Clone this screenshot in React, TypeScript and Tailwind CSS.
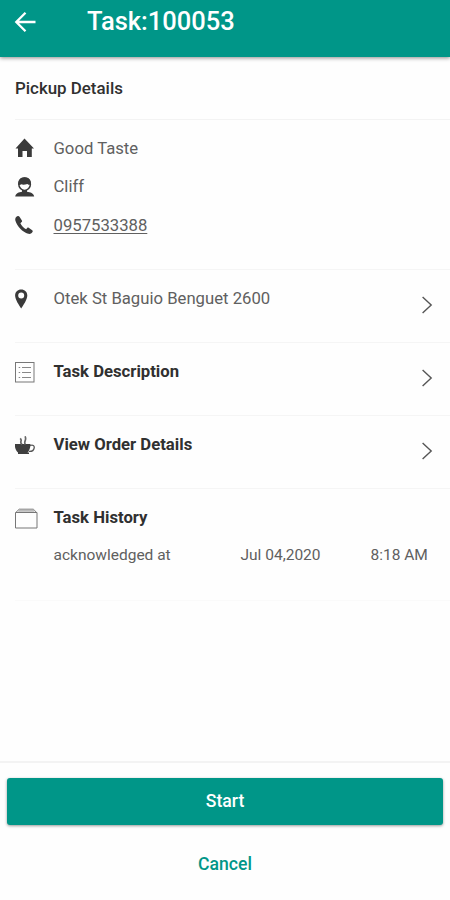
import type { ReactNode } from "react";

const PICKUP_LABEL = "Pickup Details";

function ArrowBack() {
  return (
    <svg width="22" height="22" viewBox="0 0 22 22" fill="none" stroke="#fff" strokeWidth="2.3">
      <path d="M21.5 11H3M11.5 1.8L2.3 11L11.5 20.2" />
    </svg>
  );
}

function HomeIcon() {
  return (
    <svg width="20" height="20" viewBox="0 0 20 20" fill="#3a3a3a">
      <path d="M9.5 0.5L19 10.5H16.8V19H12V13H7.5V19H3V10.5H0.5L9.5 0.5Z" />
    </svg>
  );
}

function PersonIcon() {
  return (
    <svg width="20" height="20" viewBox="0 0 20 20">
      <path d="M7 12H12V14.8C15.2 15.2 18.8 16.4 19.2 19.6H0.2C0.6 16.4 4 15.2 7 14.8Z" fill="#3a3a3a" />
      <ellipse cx="9.6" cy="7.2" rx="5.8" ry="6.2" fill="#fff" stroke="#3a3a3a" strokeWidth="1.5" />
      <path d="M3.2 7.8C2.8 3 5.4 0.3 9.6 0.3S16.4 3 16 7.8C14.2 8 13.2 7.8 12.4 7C9.6 7.8 7.2 7.8 6.4 7.2C5.6 7.9 4.6 8 3.2 7.8Z" fill="#3a3a3a" />
    </svg>
  );
}

function PhoneIcon() {
  return (
    <svg width="20" height="20" viewBox="0 0 20 20" fill="#3a3a3a">
      <path d="M2.3 1.2C0.5 2.2 -0.2 3.8 0.5 6C2.2 11.5 7.5 17 13.2 18.8C15.3 19.3 17 18.3 17.7 16.6C17.9 16 17.7 15.6 17.2 15.2L13.7 12.7C13.1 12.3 12.6 12.4 12.2 12.9L11.1 14.2C9 13.2 6.3 10.5 5.4 8.2L6.6 7.1C7.1 6.7 7.2 6.2 6.9 5.6L4.5 1.7C4 0.9 3.1 0.8 2.3 1.2Z" />
    </svg>
  );
}

function PinIcon() {
  return (
    <svg width="14" height="20" viewBox="0 0 14 20" fill="#3a3a3a" fillRule="evenodd">
      <path d="M6.2 0.5C9.7 0.5 12.3 3 12.3 6.5C12.3 10.5 8.2 16.5 6.2 19.5C4.2 16.5 0.1 10.5 0.1 6.5C0.1 3 2.7 0.5 6.2 0.5ZM6.2 3.5A3 3 0 1 0 6.2 9.5A3 3 0 1 0 6.2 3.5Z" />
    </svg>
  );
}

function ListIcon() {
  return (
    <svg width="20" height="21" viewBox="0 0 20 21" fill="none" stroke="#777">
      <rect x="0.5" y="0.5" width="18.5" height="19.5" />
      <path d="M7 5.5H16M7 10.5H16M7 15.5H16M3.7 5.5H5.2M3.7 10.5H5.2M3.7 15.5H5.2" stroke="#888" />
    </svg>
  );
}

function CupIcon() {
  return (
    <svg width="20" height="19" viewBox="0 0 20 19">
      <path d="M-0.3 8H15.5C15.5 11.8 14.3 15 12.5 16.5H14V18H3V16.5C1 15 -0.3 11.8 -0.3 8Z" fill="#3f3f3f" />
      <path d="M15 9.5C18 8.6 19.5 9.6 19.2 11.8C18.8 14.4 16.5 15.6 13.8 15.4" fill="none" stroke="#555" strokeWidth="1.3" />
      <path d="M7 8.5C3.8 5.8 8 4.8 5.2 2.3M10.4 8.5C8 5.8 12.3 4 10 0.3" fill="none" stroke="#666" strokeWidth="1.7" />
    </svg>
  );
}

function BoxIcon() {
  return (
    <svg width="24" height="21" viewBox="0 0 24 21" fill="none" stroke="#777">
      <path d="M0.5 4.5H22V20H0.5ZM0.8 4.5L4.2 1.2H18.3L21.7 4.5" />
      <path d="M3.2 2.8H19.4" stroke="#bbb" strokeWidth="2" />
    </svg>
  );
}

function Chevron() {
  return (
    <svg width="11" height="18" viewBox="0 0 11 18" fill="none" stroke="#555" strokeWidth="1.4">
      <path d="M0.6 1L9.2 9L0.6 17" />
    </svg>
  );
}

function InfoRow({ icon, children }: { icon: ReactNode; children: ReactNode }) {
  return (
    <div className="flex h-[38.5px] items-center">
      <div className="flex w-[38.5px] shrink-0">{icon}</div>
      <span>{children}</span>
    </div>
  );
}

function LinkRow({ icon, label, bold }: { icon: ReactNode; label: string; bold?: boolean }) {
  return (
    <button className="ml-[15px] flex h-[73px] items-start border-b border-[#f5f5f5] pt-[19px] pr-[17px] text-left">
      <div className="flex h-5 w-[38.5px] shrink-0 items-center">{icon}</div>
      <span className={bold ? "flex-1 leading-5 font-bold text-[#303030]" : "flex-1 leading-5"}>{label}</span>
      <span className="pt-[7px]">
        <Chevron />
      </span>
    </button>
  );
}

export default function App() {
  return (
    <div className="flex h-[900px] w-[450px] flex-col overflow-hidden bg-[#fefefe] font-[Roboto,sans-serif] text-[16.7px] text-[#606060]">
      <header className="flex h-[57px] shrink-0 items-start bg-[#009688] pl-[14px] shadow-[0_1px_4px_rgba(0,0,0,0.45)]">
        <div className="w-[73px] pt-[11px]">
          <ArrowBack />
        </div>
        <h1 className="pt-[6px] text-[25.5px] leading-[30px] font-medium text-white">Task:100053</h1>
      </header>

      <main className="flex flex-1 flex-col">
        <h2 className="ml-[15px] h-[63px] border-b border-[#f3f3f3] pt-[21px] text-[16.9px] leading-5 font-medium text-[#303030]">
          {PICKUP_LABEL}
        </h2>

        <section className="ml-[15px] h-[150px] border-b border-[#f5f5f5] pt-[9px]">
          <InfoRow icon={<HomeIcon />}>Good Taste</InfoRow>
          <InfoRow icon={<PersonIcon />}>Cliff</InfoRow>
          <InfoRow icon={<PhoneIcon />}>
            <span className="underline underline-offset-2">0957533388</span>
          </InfoRow>
        </section>

        <LinkRow icon={<PinIcon />} label="Otek St Baguio Benguet 2600" />
        <LinkRow icon={<ListIcon />} label="Task Description" bold />
        <LinkRow icon={<CupIcon />} label="View Order Details" bold />

        <section className="ml-[15px] h-[112px] border-b border-[#fafafa] pt-[19px]">
          <div className="flex">
            <div className="flex h-5 w-[38.5px] items-center">
              <BoxIcon />
            </div>
            <h3 className="leading-5 font-bold text-[#303030]">Task History</h3>
          </div>
          <div className="mt-[17px] flex pl-[38.5px] text-[15.5px] leading-5">
            <span className="w-[187px]">acknowledged at</span>
            <span className="w-[130px]">Jul 04,2020</span>
            <span>8:18 AM</span>
          </div>
        </section>
      </main>

      <footer className="flex h-[139px] shrink-0 flex-col border-t-2 border-[#f3f3f3] px-[7px] pt-[15px] text-[17.6px] font-medium">
        <button className="h-[47px] rounded-[3px] bg-[#009688] pb-px text-white shadow-[0_1px_3px_rgba(0,0,0,0.4)]">
          Start
        </button>
        <button className="mt-[15px] h-12 text-[#009688]">Cancel</button>
      </footer>
    </div>
  );
}
